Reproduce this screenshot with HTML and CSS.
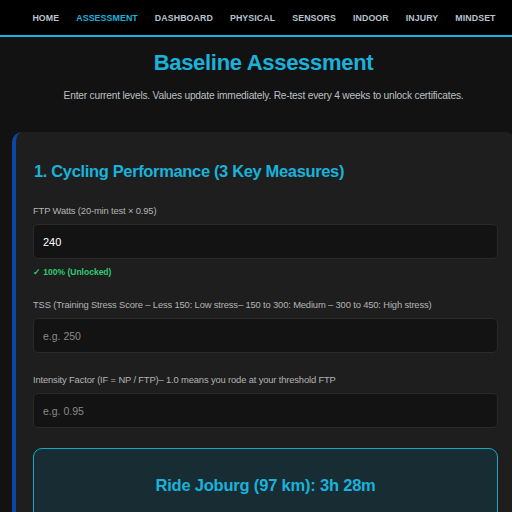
FILE: index.html
```html
<!DOCTYPE html>
<html>
<head>
<meta charset="utf-8">
<link rel="stylesheet" href="styles.css">
</head>
<body>
<nav class="nav">
  <a class="nav-link">Home</a>
  <a class="nav-link active">Assessment</a>
  <a class="nav-link">Dashboard</a>
  <a class="nav-link">Physical</a>
  <a class="nav-link">Sensors</a>
  <a class="nav-link">Indoor</a>
  <a class="nav-link">Injury</a>
  <a class="nav-link">Mindset</a>
</nav>
<main class="page">
  <h1 class="title">Baseline Assessment</h1>
  <p class="subtitle">Enter current levels. Values update immediately. Re-test every 4 weeks to unlock certificates.</p>
  <section class="card">
    <h2 class="card-title">1. Cycling Performance (3 Key Measures)</h2>
    <div class="field">
      <label class="label">FTP Watts (20-min test × 0.95)</label>
      <input class="input value" type="text" value="240">
      <div class="status">✓ 100% (Unlocked)</div>
    </div>
    <div class="field">
      <label class="label">TSS (Training Stress Score – Less 150: Low stress– 150 to 300: Medium – 300 to 450: High stress)</label>
      <input class="input" type="text" placeholder="e.g. 250">
    </div>
    <div class="field">
      <label class="label">Intensity Factor (IF = NP / FTP)– 1.0 means you rode at your threshold FTP</label>
      <input class="input" type="text" placeholder="e.g. 0.95">
    </div>
    <div class="result">
      <div class="result-text">Ride Joburg (97 km): 3h 28m</div>
    </div>
  </section>
</main>
</body>
</html>
```

FILE: styles.css
```css
html, body {
  margin: 0;
  padding: 0;
  overflow: hidden;
  background: #121212;
}
body {
  font-family: "Liberation Sans", Arial, sans-serif;
  color: #bbb;
}
.nav {
  background: #000;
  height: 35px;
  border-bottom: 2px solid #1ab2da;
  display: flex;
  align-items: center;
  justify-content: center;
  gap: 17px;
  padding-left: 16px;
}
.nav-link {
  font-size: 8.8px;
  font-weight: bold;
  text-transform: uppercase;
  letter-spacing: 0.1px;
  color: #b9c3cd;
}
.nav-link.active {
  color: #1ab2da;
}
.page {
  padding: 0 0 0 12px;
}
.title {
  margin: 12px -3px 0 0;
  text-align: center;
  font-size: 22px;
  line-height: 28px;
  letter-spacing: -0.3px;
  font-weight: bold;
  color: #1ab2da;
}
.subtitle {
  margin: 12px -3px 0 0;
  text-align: center;
  font-size: 10.2px;
  line-height: 14px;
  letter-spacing: -0.2px;
  color: #bcc0c4;
}
.card {
  margin: 29px -3px 0 0;
  background: #1e1e1e;
  border-left: 4px solid #0d47a1;
  border-radius: 10px;
  padding: 28px 17px 20px;
}
.card-title {
  margin: 0 0 22px 1px;
  font-size: 16.5px;
  line-height: 22px;
  letter-spacing: -0.35px;
  font-weight: bold;
  color: #1ab2da;
}
.field {
  margin-bottom: 20px;
}
.label {
  display: block;
  font-size: 9.4px;
  line-height: 13px;
  letter-spacing: -0.15px;
  color: #b4b4b4;
  margin-bottom: 7px;
}
.input {
  display: block;
  box-sizing: border-box;
  width: 100%;
  height: 35px;
  background: #131313;
  border: 1px solid #2a2a2a;
  border-radius: 5px;
  padding: 0 9px;
  font-family: inherit;
  font-size: 10.5px;
  color: #fff;
  outline: none;
}
.input.value {
  font-size: 11px;
}
.input::placeholder {
  color: #8a8a8a;
}
.status {
  margin-top: 7px;
  font-size: 8.5px;
  line-height: 12px;
  font-weight: bold;
  color: #2ecc71;
}
.result {
  margin-top: 3px;
  background: #182d33;
  border: 1.5px solid #17a8c8;
  border-radius: 9px;
  padding: 25px 10px;
  text-align: center;
}
.result-text {
  font-size: 16.5px;
  line-height: 22px;
  letter-spacing: -0.2px;
  font-weight: bold;
  color: #1ab2da;
}
```
